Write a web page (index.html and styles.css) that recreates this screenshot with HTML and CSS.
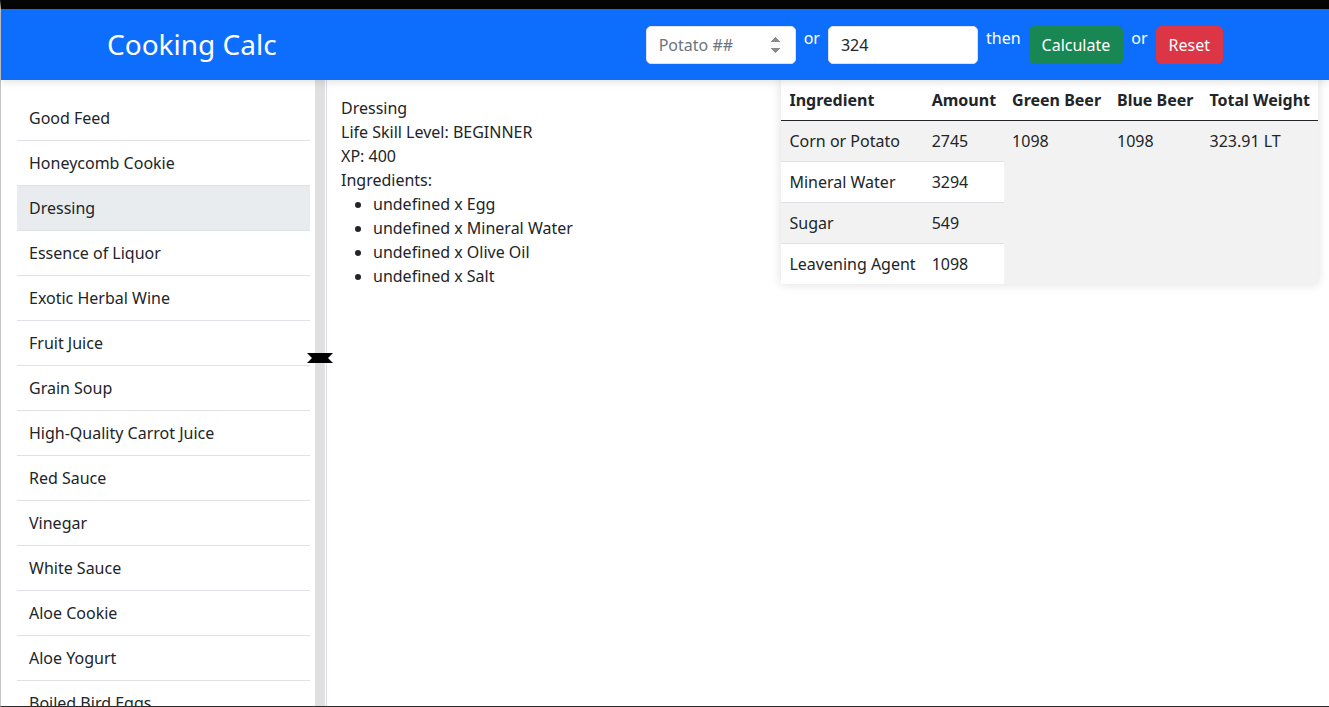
FILE: index.html
```html
<!DOCTYPE html>
<html lang="en">
<head>
<meta charset="utf-8">
<title>Cooking Calc</title>
<link rel="stylesheet" href="styles.css">
</head>
<body>
<div class="app">
  <header class="topbar">
    <div class="container">
      <div class="brand">Cooking Calc</div>
      <form class="calc-form">
        <input class="field" type="number" placeholder="Potato ##" autofocus>
        <span class="word">or</span>
        <input class="field" type="text" value="324">
        <span class="word">then</span>
        <button type="button" class="btn btn-green">Calculate</button>
        <span class="word">or</span>
        <button type="button" class="btn btn-red">Reset</button>
      </form>
    </div>
  </header>
  <div class="workspace">
    <aside class="sidebar">
      <ul class="recipe-list">
        <li class="recipe">Good Feed</li>
        <li class="recipe">Honeycomb Cookie</li>
        <li class="recipe active">Dressing</li>
        <li class="recipe">Essence of Liquor</li>
        <li class="recipe">Exotic Herbal Wine</li>
        <li class="recipe">Fruit Juice</li>
        <li class="recipe">Grain Soup</li>
        <li class="recipe">High-Quality Carrot Juice</li>
        <li class="recipe">Red Sauce</li>
        <li class="recipe">Vinegar</li>
        <li class="recipe">White Sauce</li>
        <li class="recipe">Aloe Cookie</li>
        <li class="recipe">Aloe Yogurt</li>
        <li class="recipe">Boiled Bird Eggs</li>
        <li class="recipe">Boiled Flower</li>
      </ul>
    </aside>
    <div class="splitter">
      <svg class="grip" width="26" height="10" viewBox="0 0 26 10"><polygon points="0,0 26,0 21,5 26,10 0,10 5,5" fill="#000"/></svg>
    </div>
    <main class="main">
      <section class="info">
        <div>Dressing</div>
        <div>Life Skill Level: BEGINNER</div>
        <div>XP: 400</div>
        <div>Ingredients:</div>
        <ul class="ing-list">
          <li>undefined x Egg</li>
          <li>undefined x Mineral Water</li>
          <li>undefined x Olive Oil</li>
          <li>undefined x Salt</li>
        </ul>
      </section>
      <div class="result-card">
        <table class="result">
          <thead>
            <tr><th>Ingredient</th><th>Amount</th><th>Green Beer</th><th>Blue Beer</th><th>Total Weight</th></tr>
          </thead>
          <tbody>
            <tr class="striped"><td>Corn or Potato</td><td>2745</td><td rowspan="4">1098</td><td rowspan="4">1098</td><td rowspan="4">323.91 LT</td></tr>
            <tr><td>Mineral Water</td><td>3294</td></tr>
            <tr class="striped"><td>Sugar</td><td>549</td></tr>
            <tr class="last"><td>Leavening Agent</td><td>1098</td></tr>
          </tbody>
        </table>
      </div>
    </main>
  </div>
</div>
</body>
</html>
```
FILE: styles.css
```css
* { box-sizing: border-box; }
html, body { margin: 0; padding: 0; height: 100%; }
body {
  font-family: "Noto Sans", "DejaVu Sans", sans-serif;
  font-size: 16px;
  line-height: 24px;
  color: #212529;
  background: #fff;
  overflow: hidden;
}
.app {
  height: 100vh;
  display: flex;
  flex-direction: column;
  border-top: 9px solid #050505;
  border-left: 1px solid #c4c4c4;
  border-bottom: 1px solid #2a2a2a;
}
.topbar {
  background: #0d6efd;
  padding: 17px 0 16px;
  position: relative;
  z-index: 2;
  box-shadow: 0 2px 8px rgba(0, 0, 0, 0.12);
  flex: none;
}
.container {
  max-width: 1140px;
  margin: 0 auto;
  padding: 0 12px;
  display: flex;
  justify-content: space-between;
  align-items: center;
}
.brand {
  color: #fff;
  font-size: 28px;
  line-height: 36px;
  padding-bottom: 2px;
}
.calc-form {
  display: flex;
  align-items: flex-start;
  gap: 8px;
}
.word {
  color: #fff;
  line-height: 24px;
}
.field {
  width: 150px;
  height: 38px;
  padding: 6px 12px;
  border: 1px solid #dee2e6;
  border-radius: 5px;
  font-family: inherit;
  font-size: 16px;
  line-height: 24px;
  color: #212529;
  background: #fff;
  outline: none;
}
.field::placeholder { color: #6c757d; }
.field::-webkit-inner-spin-button { opacity: 1; }
.btn {
  height: 38px;
  padding: 6px 12px;
  border: 1px solid transparent;
  border-radius: 5px;
  font-family: inherit;
  font-size: 16px;
  line-height: 24px;
  color: #fff;
}
.btn-green { background: #198754; border-color: #198754; }
.btn-red { background: #dc3545; border-color: #dc3545; }
.workspace {
  flex: 1;
  display: flex;
  min-height: 0;
  overflow: hidden;
}
.sidebar {
  width: 314px;
  flex: none;
  padding: 16px 5px 0 16px;
  overflow: hidden;
}
.recipe-list {
  list-style: none;
  margin: 0;
  padding: 0;
}
.recipe {
  padding: 10px 12px;
  border-bottom: 1px solid #dee2e6;
}
.recipe.active { background: #e9ecef; }
.splitter {
  width: 12px;
  flex: none;
  background: linear-gradient(to right, #e0e0e0 0, #e0e0e0 10px, #fff 10px, #fff 11px, #dcd8ea 11px, #dcd8ea 12px);
  position: relative;
}
.grip {
  position: absolute;
  left: -8px;
  top: 273px;
  display: block;
}
.main {
  flex: 1;
  display: flex;
  justify-content: space-between;
  align-items: flex-start;
  min-width: 0;
}
.info {
  padding: 16px 14px;
}
.ing-list {
  margin: 0;
  padding-left: 32px;
}
.result-card {
  margin-right: 11px;
  background: #fff;
  box-shadow: 0 0 10px rgba(0, 0, 0, 0.14);
}
.result {
  border-collapse: collapse;
}
.result th, .result td {
  padding: 8px;
  text-align: left;
  vertical-align: top;
  white-space: nowrap;
}
.result th {
  font-weight: 700;
  border-bottom: 1px solid #212529;
}
.result td {
  border-bottom: 1px solid #dee2e6;
}
.result td[rowspan] {
  background: #f2f2f2;
  border-bottom: none;
}
.result tr.striped td { background: #f2f2f2; }
.result tr.last td { border-bottom: none; }
```
